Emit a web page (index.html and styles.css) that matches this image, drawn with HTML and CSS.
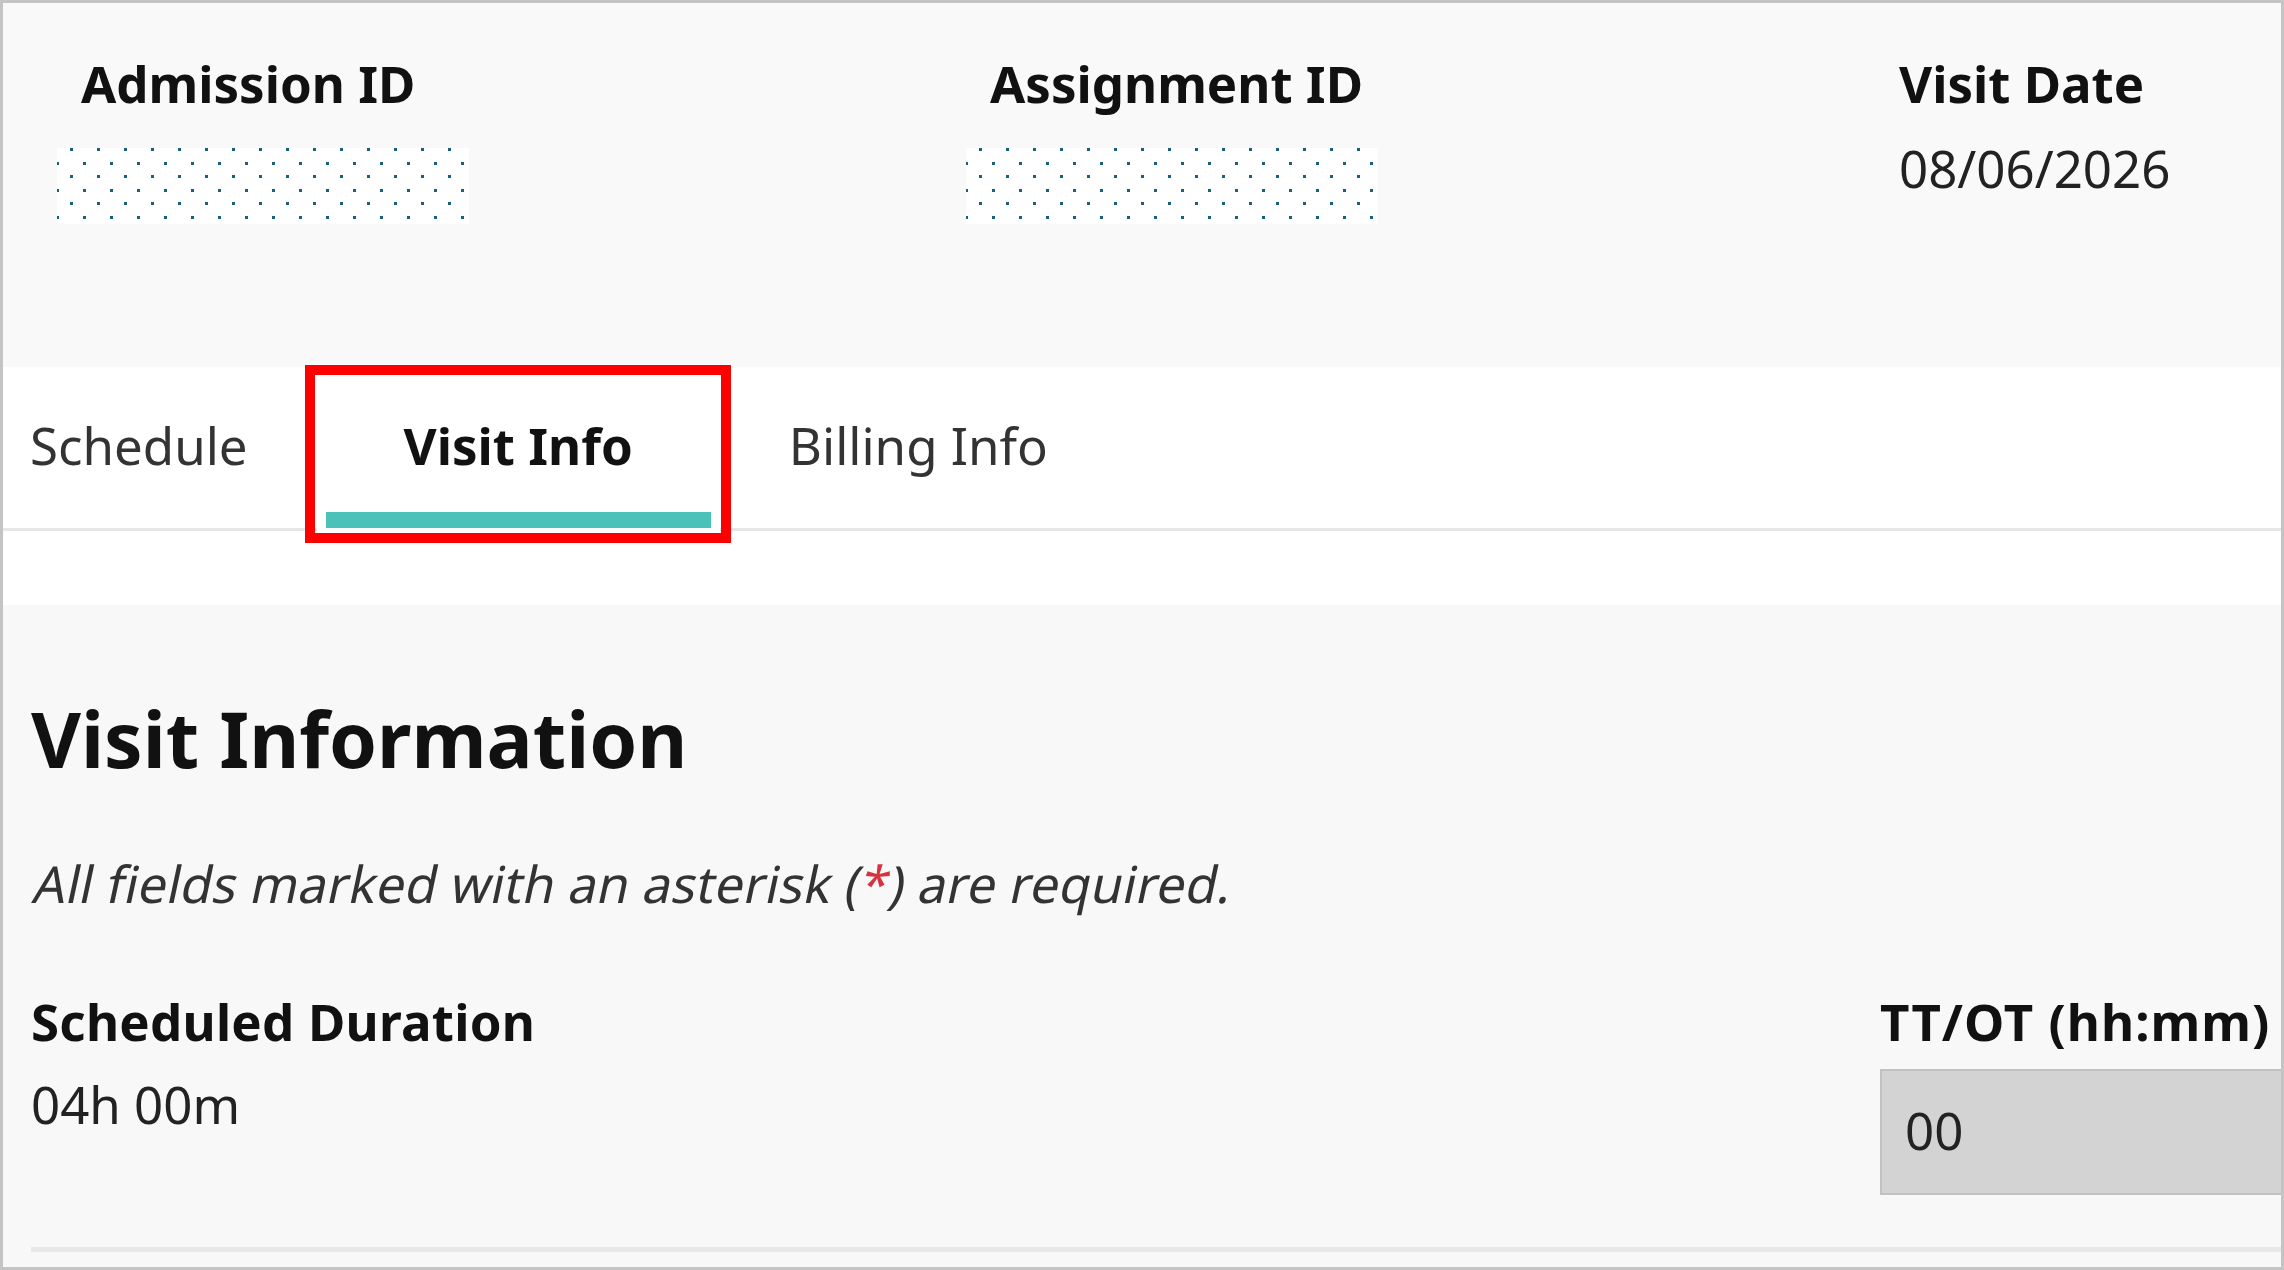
FILE: index.html
```html
<!DOCTYPE html>
<html lang="en">
<head>
<meta charset="utf-8">
<title>Visit Info</title>
<link rel="stylesheet" href="styles.css">
</head>
<body>
<div class="page">
  <header class="summary">
    <div class="summary-col">
      <div class="summary-label">Admission ID</div>
      <div class="masked"></div>
    </div>
    <div class="summary-col">
      <div class="summary-label">Assignment ID</div>
      <div class="masked"></div>
    </div>
    <div class="summary-col">
      <div class="summary-label">Visit Date</div>
      <div class="summary-value">08/06/2026</div>
    </div>
  </header>
  <nav class="tabs">
    <div class="tab tab-first">Schedule</div>
    <div class="tab tab-active">Visit Info</div>
    <div class="tab">Billing Info</div>
  </nav>
  <div class="tab-spacer"></div>
  <main class="content">
    <h1 class="title">Visit Information</h1>
    <p class="note"><span class="note-text">All fields marked with an asterisk (<span class="req">*</span>) are required.</span></p>
    <div class="fields">
      <div class="field field-duration">
        <div class="field-label">Scheduled Duration</div>
        <div class="field-value">04h 00m</div>
      </div>
      <div class="field field-ttot">
        <div class="field-label field-label-wide">TT/OT (hh:mm)</div>
        <div class="field-input">00</div>
      </div>
    </div>
    <div class="divider"></div>
  </main>
</div>
</body>
</html>
```
FILE: styles.css
```css
html, body {
  margin: 0;
  padding: 0;
  background: #ffffff;
}

.page {
  width: 2284px;
  height: 1270px;
  box-sizing: border-box;
  border: 3px solid #c4c4c4;
  overflow: hidden;
  display: flex;
  flex-direction: column;
  background: #f8f8f8;
  font-family: "Noto Sans", "Open Sans", sans-serif;
  color: #1a1a1a;
}

/* Summary header */
.summary {
  display: grid;
  grid-template-columns: 909px 909px 1fr;
  padding: 45px 0 143px 78px;
  background: #f9f9f9;
}

.summary-label {
  font-size: 51px;
  line-height: 70px;
  font-weight: 700;
  color: #111111;
  white-space: nowrap;
}

.summary-value {
  margin-top: 15px;
  font-size: 51px;
  line-height: 70px;
  color: #222222;
}

.masked {
  width: 412px;
  height: 76px;
  margin: 30px 0 0 -24px;
  background-color: #ffffff;
  background-image:
    conic-gradient(at 3px 3px, transparent 75%, #19607f 0),
    conic-gradient(at 3px 3px, transparent 75%, #19607f 0);
  background-size: 27px 27px, 27px 27px;
  background-position: 13px 0, -1px 14px;
}

/* Tabs */
.tabs {
  display: flex;
  background: #ffffff;
  border-bottom: 3px solid #e6e6e6;
}

.tab {
  padding: 43px 78px 32px;
  border-bottom: 16px solid transparent;
  font-size: 51px;
  line-height: 70px;
  color: #333333;
  white-space: nowrap;
}

.tab-first {
  padding-left: 27px;
}

.tab-active {
  position: relative;
  font-weight: 700;
  color: #111111;
  border-bottom-color: #4ac1b9;
  box-shadow: 0 7px 0 9px #ffffff;
}

.tab-active::before {
  content: "";
  position: absolute;
  left: -21px;
  right: -20px;
  top: -2px;
  bottom: -31px;
  border: 10px solid #ff0000;
}

.tab-spacer {
  height: 74px;
  background: #ffffff;
}

/* Content */
.content {
  flex: 1;
  padding: 84px 0 0 28px;
  background: #f8f8f8;
}

.title {
  margin: 0;
  font-size: 77px;
  line-height: 100px;
  font-weight: 700;
  color: #111111;
  white-space: nowrap;
}

.note {
  margin: 59px 0 0;
  font-size: 51px;
  line-height: 70px;
  color: #333333;
  white-space: nowrap;
}

.note-text {
  display: inline-block;
  letter-spacing: 0.3px;
  transform: skewX(-12deg);
  transform-origin: 0 55px;
}

.req {
  color: #d63340;
}

.fields {
  display: flex;
  margin-top: 68px;
}

.field-duration {
  flex: 0 0 1849px;
}

.field-ttot {
  flex: 0 0 600px;
}

.field-label {
  font-size: 51px;
  line-height: 70px;
  font-weight: 700;
  letter-spacing: 0.25px;
  color: #111111;
  white-space: nowrap;
}

.field-label-wide {
  letter-spacing: 1px;
}

.field-value {
  margin-top: 13px;
  font-size: 51px;
  line-height: 70px;
  color: #222222;
}

.field-input {
  margin-top: 13px;
  height: 126px;
  box-sizing: border-box;
  padding: 24px 23px 0;
  border: 2px solid #c2c2c2;
  background: #d3d3d3;
  font-size: 51px;
  line-height: 70px;
  color: #222222;
}

.divider {
  margin-top: 52px;
  height: 5px;
  background: #e8e8e8;
}
```
